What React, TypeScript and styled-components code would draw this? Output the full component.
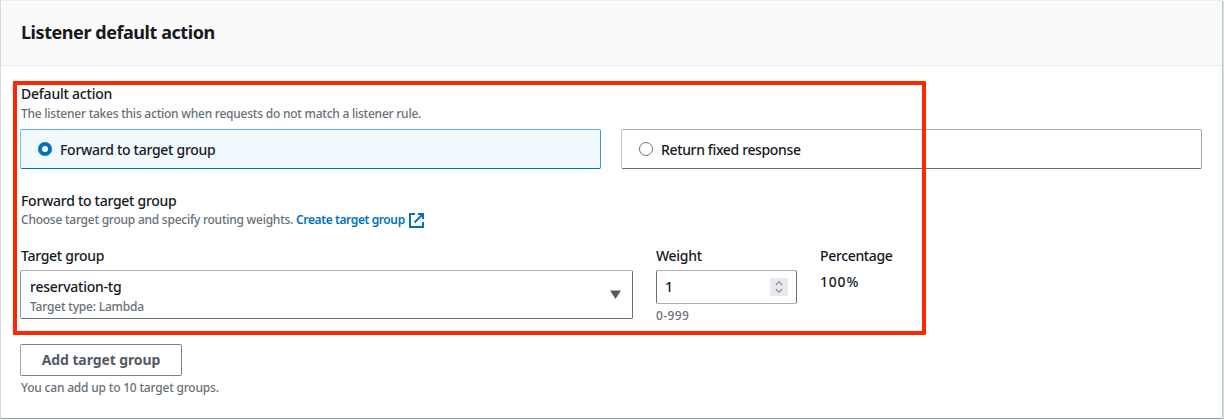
import React from 'react';
import styled, { createGlobalStyle } from 'styled-components';

const GlobalStyle = createGlobalStyle`
  *, *::before, *::after { box-sizing: border-box; }
  body {
    margin: 0;
    background: #fff;
    color: #16191f;
    font-family: 'Noto Sans', 'Open Sans', sans-serif;
    font-size: 14px;
    line-height: 20px;
  }
`;

const Panel = styled.section`
  position: relative;
  width: 1223px;
  height: 419px;
  background: #fff;
  border: 1px solid #d5dbdb;
  border-top-color: #eaeded;
  border-right-color: #c3c8c9;
  border-bottom: 1px solid #979d9f;
  box-shadow: 1px 1px 0 #d9dddd;
`;

const Header = styled.header`
  display: flex;
  align-items: center;
  height: 65px;
  padding: 0 20px 2px;
  background: #fafafa;
  border-bottom: 1px solid #eaeded;
`;

const Title = styled.h2`
  margin: 0;
  font-size: 18px;
  line-height: 22px;
  font-weight: 700;
  letter-spacing: -0.44px;
`;

const Body = styled.div`
  display: flex;
  flex-direction: column;
  align-items: stretch;
  padding: 18px 20px 0;
`;

const Field = styled.div<{ $gap?: number; $rowGap?: number }>`
  display: flex;
  flex-direction: column;
  align-items: flex-start;
  row-gap: ${({ $rowGap = 0 }) => $rowGap}px;
  margin-top: ${({ $gap = 0 }) => $gap}px;
`;

const Text = styled.span<{ $track?: number }>`
  font-size: 14px;
  line-height: 20px;
  font-weight: 500;
  white-space: nowrap;
  letter-spacing: ${({ $track = -0.28 }) => $track}px;
`;

const Hint = styled.span<{ $track?: number }>`
  font-size: 12px;
  line-height: 18px;
  font-weight: 500;
  color: #687078;
  white-space: nowrap;
  letter-spacing: ${({ $track = -0.235 }) => $track}px;
`;

const HintRow = styled.div`
  display: flex;
  align-items: center;
  height: 18px;
`;

const Link = styled.a`
  display: inline-flex;
  align-items: center;
  gap: 4px;
  margin-left: 3px;
  font-size: 12px;
  line-height: 18px;
  font-weight: 600;
  color: #0073bb;
  white-space: nowrap;
  letter-spacing: -0.4px;
`;

const Tiles = styled.div`
  display: grid;
  grid-template-columns: 581px 581px;
  column-gap: 20px;
  margin-top: 6px;
  margin-left: -1px;
`;

const Tile = styled.label<{ $selected?: boolean }>`
  display: flex;
  align-items: center;
  gap: 8px;
  height: 40px;
  padding-left: 17px;
  border: 1px solid ${({ $selected }) => ($selected ? '#0073bb' : '#687078')};
  border-top-color: ${({ $selected }) => ($selected ? '#66abd6' : '#a9adb1')};
  border-left-color: ${({ $selected }) => ($selected ? '#7fb9dd' : '#c3c6c8')};
  border-right-color: ${({ $selected }) => ($selected ? '#3f96cc' : '#a4a9ad')};
  border-radius: 2px;
  background: ${({ $selected }) => ($selected ? '#f1faff' : '#fff')};

  ${Text} {
    padding-top: 2px;
  }
`;

const Radio = styled.span<{ $selected?: boolean }>`
  width: 14px;
  height: 14px;
  flex: none;
  border-radius: 50%;
  border: ${({ $selected }) => ($selected ? '4px solid #0073bb' : '1px solid #687078')};
  background: #fff;
`;

const Columns = styled.div`
  display: grid;
  grid-template-columns: 612px 141px 100px;
  column-gap: 23px;
  margin-top: 17px;
  align-items: start;
`;

const Select = styled.div`
  display: flex;
  align-items: center;
  justify-content: space-between;
  width: 613px;
  height: 49px;
  margin: 4px 0 0 -1px;
  padding: 0 11px 0 9px;
  border: 1px solid #687078;
  border-top-color: #aab0b6;
  border-left-color: #8d949a;
  border-radius: 2px;
`;

const Option = styled.div`
  display: flex;
  flex-direction: column;
  gap: 1px;
  padding-top: 3px;
`;

const NumberBox = styled.div`
  display: flex;
  align-items: center;
  justify-content: space-between;
  width: 141px;
  height: 34px;
  margin-top: 4px;
  padding: 0 8px 0 8px;
  border: 1px solid #687078;
  border-top-color: #aab0b6;
  border-bottom-color: #aab0b6;
  border-radius: 2px;
`;

const Stepper = styled.span`
  display: flex;
  align-items: center;
  justify-content: center;
  width: 18px;
  height: 18px;
  background: #e9e9ed;
`;

const Spaced = styled.div<{ $top: number }>`
  display: flex;
  margin-top: ${({ $top }) => $top}px;
`;

const Button = styled.button`
  width: 162px;
  height: 32px;
  margin: 0 0 0 -1px;
  padding: 0;
  border: 1px solid #7c8389;
  border-left-color: #a3a8ad;
  border-radius: 2px;
  background: #fff;
  color: #545b64;
  font: 700 14px/20px 'Noto Sans', 'Open Sans', sans-serif;
  letter-spacing: -0.1px;
`;

const Highlight = styled.div`
  position: absolute;
  left: 12px;
  top: 80px;
  width: 913px;
  height: 254px;
  border: 4px solid #ff2600;
  border-radius: 1px;
  pointer-events: none;
`;

const ExternalIcon = () => (
  <svg width="15" height="15" viewBox="0 0 15 15" fill="none" stroke="#0073bb" strokeWidth="2">
    <path d="M6 1H1v13h13V9" />
    <path d="M9 1h5v5M14 1L5.5 9.5" />
  </svg>
);

const Caret = () => (
  <svg width="11" height="9" viewBox="0 0 11 9">
    <path d="M0 0.5h11L5.5 9z" fill="#545b64" />
  </svg>
);

const StepArrows = () => (
  <svg width="8" height="12" viewBox="0 0 8 12" fill="none" stroke="#8f8f9d" strokeWidth="1.3">
    <path d="M0.8 4L4 0.9L7.2 4M0.8 8L4 11.1L7.2 8" />
  </svg>
);

export default function App() {
  return (
    <>
      <GlobalStyle />
      <Panel>
        <Header>
          <Title>Listener default action</Title>
        </Header>
        <Body>
          <Field $rowGap={1}>
            <Text $track={-0.22}>Default action</Text>
            <Hint>The listener takes this action when requests do not match a listener rule.</Hint>
          </Field>
          <Tiles>
            <Tile $selected>
              <Radio $selected />
              <Text>Forward to target group</Text>
            </Tile>
            <Tile>
              <Radio />
              <Text $track={-0.36}>Return fixed response</Text>
            </Tile>
          </Tiles>
          <Field $gap={22}>
            <Text>Forward to target group</Text>
            <HintRow>
              <Hint $track={-0.245}>Choose target group and specify routing weights.</Hint>
              <Link>
                <span>Create target group</span>
                <ExternalIcon />
              </Link>
            </HintRow>
          </Field>
          <Columns>
            <Field>
              <Text>Target group</Text>
              <Select>
                <Option>
                  <Text $track={-0.25}>reservation-tg</Text>
                  <Hint $track={-0.2}>Target type: Lambda</Hint>
                </Option>
                <Caret />
              </Select>
            </Field>
            <Field>
              <Text>Weight</Text>
              <NumberBox>
                <Text>1</Text>
                <Stepper>
                  <StepArrows />
                </Stepper>
              </NumberBox>
              <Spaced $top={3}>
                <Hint $track={0.4}>0-999</Hint>
              </Spaced>
            </Field>
            <Field>
              <Text $track={-0.35}>Percentage</Text>
              <Spaced $top={6}>
                <Text $track={0.8}>100%</Text>
              </Spaced>
            </Field>
          </Columns>
          <Field $gap={19}>
            <Button>Add target group</Button>
            <Spaced $top={3}>
              <Hint $track={-0.2}>You can add up to 10 target groups.</Hint>
            </Spaced>
          </Field>
        </Body>
        <Highlight />
      </Panel>
    </>
  );
}
